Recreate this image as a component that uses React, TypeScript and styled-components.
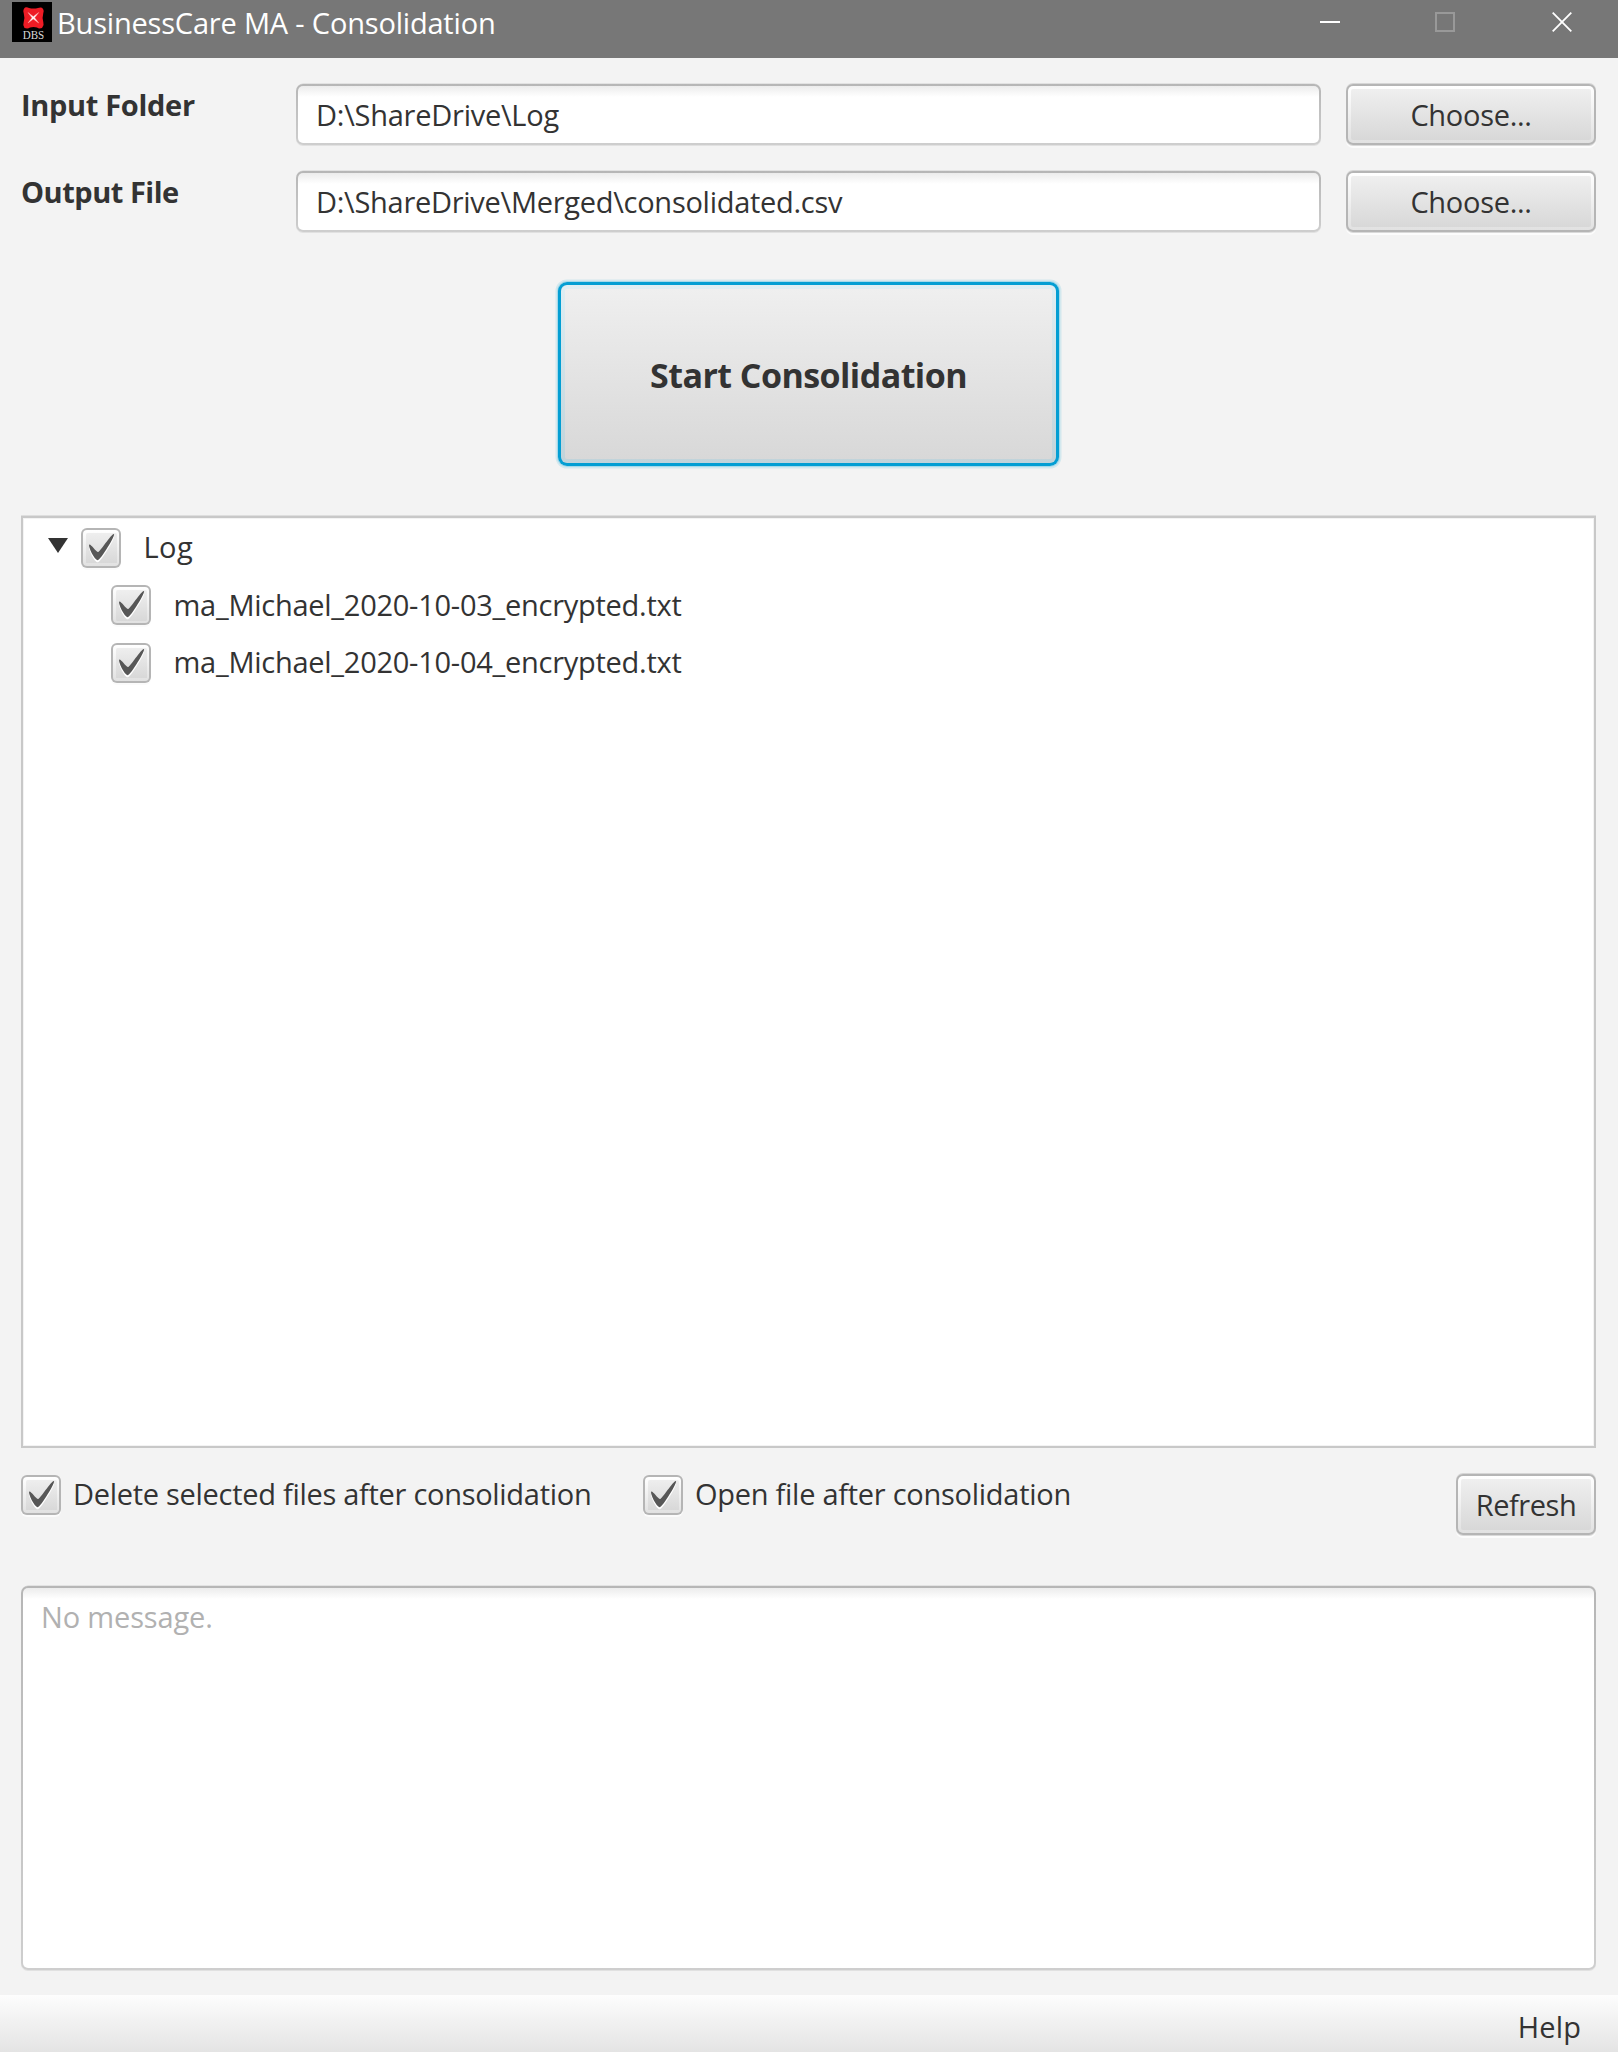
import React from "react";
import styled, { createGlobalStyle, css } from "styled-components";

const GlobalStyle = createGlobalStyle`
  *, *::before, *::after { box-sizing: border-box; }
  body { margin: 0; background: #f3f3f3; }
`;

const Window = styled.div`
  width: 1618px;
  height: 2052px;
  display: flex;
  flex-direction: column;
  background: #f3f3f3;
  color: #333;
  font-family: "Open Sans", "Noto Sans", sans-serif;
  font-size: 29px;
  line-height: 40px;
  white-space: nowrap;
  overflow: hidden;
`;

const Text = styled.span<{ $track?: number }>`
  letter-spacing: ${(p) => p.$track ?? 0}px;
`;

/* ---------- title bar ---------- */

const TitleBar = styled.header`
  height: 58px;
  flex: none;
  display: flex;
  align-items: flex-start;
  padding: 2px 45px 0 12px;
  background: #777;
  color: #fff;
`;

const AppIcon = styled.svg`
  width: 40px;
  height: 40px;
  flex: none;
`;

const Title = styled.h1`
  flex: 1;
  margin: 0 0 0 5px;
  font-size: 29px;
  font-weight: 400;
  line-height: 41px;
  letter-spacing: -0.19px;
`;

const WindowControls = styled.div`
  display: flex;
  gap: 94px;
  padding-top: 9px;

  svg {
    width: 22px;
    height: 22px;
    fill: none;
  }
`;

/* ---------- controls ---------- */

const Content = styled.main`
  flex: 1;
  display: flex;
  flex-direction: column;
  padding: 26px 22px 0 21px;
`;

const Form = styled.section`
  display: grid;
  grid-template-columns: 250px 1025px 250px;
  grid-auto-rows: 61px;
  gap: 26px 25px;
`;

const Label = styled.label`
  font-weight: 700;
  padding-top: 1px;
`;

const sunken = css`
  border: 2px solid transparent;
  border-radius: 7px;
  background:
    linear-gradient(#ececec, #fff 11px) padding-box,
    linear-gradient(#b6b6b6, #cecece) border-box;
  box-shadow: 0 -1px 0 -0.5px #d2d2d2, 0 1px 0 #e1e1e1;
`;

const Field = styled.div`
  ${sunken}
  display: flex;
  align-items: center;
  padding: 1px 0 0 18px;
`;

const raised = css`
  border: 2px solid transparent;
  background:
    linear-gradient(#efefef, #d8d8d8) content-box,
    linear-gradient(#fff, #e1e1e1) padding-box,
    linear-gradient(#b5b5b5, #b5b5b5) border-box;
`;

const Button = styled.button<{ $width?: number }>`
  ${raised}
  width: ${(p) => p.$width ?? 250}px;
  height: 61px;
  padding: 3px;
  border-radius: 7px;
  box-shadow: 0 -1px 0 #d6d6d6, 0 1px 0 #d9d9d9, 0 3px 0 #fcfcfc;
  display: flex;
  align-items: center;
  justify-content: center;
  color: inherit;
  font: inherit;
  line-height: 40px;
`;

const StartButton = styled.button`
  width: 501px;
  height: 184px;
  align-self: center;
  margin-top: 50px;
  padding: 4px;
  border: 3px solid transparent;
  border-radius: 9px;
  background:
    linear-gradient(#efefef, #d8d8d8) content-box,
    linear-gradient(#dfeef3, #c0d3da) padding-box,
    linear-gradient(#039ed3, #039ed3) border-box;
  box-shadow: 0 0 0 1px #a5d9ea, 0 0 0 2.5px #d3e8ee;
  color: inherit;
  font: inherit;
  font-size: 34px;
  font-weight: 700;
  letter-spacing: -0.55px;

  ${Text} {
    display: block;
    padding-top: 2px;
    letter-spacing: inherit;
  }
`;

/* ---------- check boxes ---------- */

const Box = styled.span`
  ${raised}
  width: 40px;
  height: 40px;
  flex: none;
  padding: 2.5px;
  border-radius: 6px;
  box-shadow: 0 2px 0 #fbfbfb;
  display: grid;

  svg {
    width: 40px;
    height: 40px;
    margin: -4.5px;
  }
`;

const MARK =
  "M-0.25,6.083c0.843-0.758,4.583,4.833,5.75,4.833S14.5-1.5,15.917-0.917c1.292,0.532-8.75,17.083-10.5,17.083C3,16.167-1.094,6.841-0.25,6.083z";

function CheckBox() {
  return (
    <Box role="checkbox" aria-checked>
      <svg viewBox="0 0 40 40">
        <path d={MARK} fill="#fff" transform="translate(8.6 9.6) scale(1.53)" />
        <path d={MARK} fill="#575757" transform="translate(8.6 7.4) scale(1.53)" />
      </svg>
    </Box>
  );
}

/* ---------- tree ---------- */

const Tree = styled.section`
  height: 932px;
  flex: none;
  margin-top: 50px;
  padding-top: 1px;
  border: 2px solid #c8c8c8;
  background: #fff;
  box-shadow: 0 -1px 0 #dedede, inset 0 0 0 1px #f3f3f3;
`;

const TreeRow = styled.div<{ $depth: number }>`
  height: 57.5px;
  display: flex;
  align-items: center;
  padding-left: ${(p) => 25 + p.$depth * 63}px;
`;

const Arrow = styled.svg`
  width: 20px;
  height: 15px;
  margin: 0 13px 5px 0;
  fill: #333;
`;

const TreeLabel = styled(Text)`
  padding: 0 0 1px 22.5px;
`;

/* ---------- options and messages ---------- */

const Options = styled.section`
  display: flex;
  align-items: flex-start;
  margin-top: 26px;
`;

const Option = styled.label<{ $width?: number }>`
  display: flex;
  align-items: center;
  gap: 12px;
  width: ${(p) => (p.$width ? `${p.$width}px` : "auto")};

  ${Text} {
    padding-bottom: 1px;
  }
`;

const Spacer = styled.div`
  flex: 1;
`;

const Messages = styled.section`
  ${sunken}
  height: 384px;
  margin-top: 51px;
  padding: 9px 18px;
  color: #b1b1b1;
`;

const HelpBar = styled.footer`
  height: 57px;
  flex: none;
  display: flex;
  justify-content: flex-end;
  padding: 12px 37px 0 0;
  background: linear-gradient(#fdfdfd, #e4e4e4);
`;

const files = ["ma_Michael_2020-10-03_encrypted.txt", "ma_Michael_2020-10-04_encrypted.txt"];

export default function App() {
  return (
    <Window>
      <GlobalStyle />
      <TitleBar>
        <AppIcon viewBox="0 0 40 40">
          <rect width="40" height="40" fill="#000" />
          <path
            d="M13 5.500 Q15 5 17 6 Q21.500 7 26 6 Q28 5 30 5.700 Q32.500 8 31.300 11 Q30 15.500 31.300 20 Q32.500 23 30 26 Q27 27 25 25.500 Q21.500 24.500 18 25.500 Q16 27 12.500 26 Q10.500 23 11.700 20 Q13 15.500 11.700 11 Q10.500 8 13 5.500Z"
            fill="#ee1c25"
          />
          <path
            d="M16 10.500 L21.300 14.600 L26.700 10.500 L22.700 15.800 L26.700 21 L21.300 17 L16 21 L20 15.800Z"
            fill="#fff"
            stroke="#ff9a9a"
            strokeWidth=".5"
          />
          <text
            x="21.500"
            y="37.400"
            textAnchor="middle"
            textLength="21.500"
            lengthAdjust="spacingAndGlyphs"
            fill="#d8d8d8"
            fontFamily="Liberation Serif, serif"
            fontSize="13.500"
          >
            DBS
          </text>
        </AppIcon>
        <Title>BusinessCare MA - Consolidation</Title>
        <WindowControls>
          <svg viewBox="0 0 22 22">
            <path d="M1 11H21" stroke="#fff" strokeWidth="2" />
          </svg>
          <svg viewBox="0 0 22 22">
            <path d="M1 2H19V20H1Z" stroke="#999" strokeWidth="2" />
          </svg>
          <svg viewBox="0 0 22 22">
            <path d="M1.700 1.700L20.300 20.300M20.300 1.700L1.700 20.300" stroke="#fff" strokeWidth="1.800" />
          </svg>
        </WindowControls>
      </TitleBar>

      <Content>
        <Form>
          <Label><Text $track={-0.32}>Input Folder</Text></Label>
          <Field><Text $track={-0.25}>D:\ShareDrive\Log</Text></Field>
          <Button><Text $track={-0.3}>Choose...</Text></Button>
          <Label><Text $track={-0.48}>Output File</Text></Label>
          <Field><Text $track={-0.28}>D:\ShareDrive\Merged\consolidated.csv</Text></Field>
          <Button><Text $track={-0.3}>Choose...</Text></Button>
        </Form>

        <StartButton><Text>Start Consolidation</Text></StartButton>

        <Tree>
          <TreeRow $depth={0}>
            <Arrow viewBox="0 0 20 15"><path d="M0 0H20L10 15Z" /></Arrow>
            <CheckBox />
            <TreeLabel $track={0.4}>Log</TreeLabel>
          </TreeRow>
          {files.map((name) => (
            <TreeRow key={name} $depth={1}>
              <CheckBox />
              <TreeLabel $track={-0.26}>{name}</TreeLabel>
            </TreeRow>
          ))}
        </Tree>

        <Options>
          <Option $width={622}>
            <CheckBox />
            <Text $track={-0.29}>Delete selected files after consolidation</Text>
          </Option>
          <Option>
            <CheckBox />
            <Text $track={-0.27}>Open file after consolidation</Text>
          </Option>
          <Spacer />
          <Button $width={140}><Text $track={-0.45}>Refresh</Text></Button>
        </Options>

        <Messages><Text $track={-0.15}>No message.</Text></Messages>
      </Content>

      <HelpBar><Text $track={0.1}>Help</Text></HelpBar>
    </Window>
  );
}
